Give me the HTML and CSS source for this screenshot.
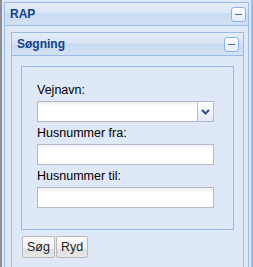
FILE: index.html
```html
<!DOCTYPE html>
<html lang="da">
<head>
  <meta charset="UTF-8">
  <title>RAP</title>
  <link rel="stylesheet" href="styles.css">
</head>
<body>
  <div class="frame">
    <div class="panel outer">
      <div class="panel-header">
        <span class="panel-title">RAP</span>
        <span class="tool"></span>
      </div>
      <div class="panel-body">
        <div class="panel inner">
          <div class="panel-header">
            <span class="panel-title">Søgning</span>
            <span class="tool"></span>
          </div>
          <div class="panel-body form-body">
            <div class="fieldset">
              <label class="field-label">Vejnavn:</label>
              <div class="combo">
                <input class="text-input" type="text">
                <span class="trigger">
                  <svg width="9" height="6" viewBox="0 0 9 6"><path d="M1 1 L4.5 4.5 L8 1" fill="none" stroke="#2b4f8c" stroke-width="2"/></svg>
                </span>
              </div>
              <label class="field-label">Husnummer fra:</label>
              <input class="text-input full" type="text">
              <label class="field-label">Husnummer til:</label>
              <input class="text-input full" type="text">
            </div>
            <div class="buttons">
              <button class="btn">Søg</button>
              <button class="btn">Ryd</button>
            </div>
          </div>
        </div>
      </div>
    </div>
  </div>
</body>
</html>
```

FILE: styles.css
```css
* {
  margin: 0;
  padding: 0;
  box-sizing: border-box;
}

body {
  width: 253px;
  height: 267px;
  overflow: hidden;
  background: #dfe8f6;
  font-family: "Liberation Sans", Arial, sans-serif;
  font-size: 12px;
}

.frame {
  height: 267px;
  border-left: 2px solid #8f8f8f;
  border-right: 2px solid #99bbe8;
  padding: 2px 2px 0 2px;
  background: #dfe8f6;
}

.panel {
  border: 1px solid #99bbe8;
  background: #dfe8f6;
}

.outer {
  height: 100%;
  border-bottom: none;
}

.panel-header {
  display: flex;
  align-items: center;
  justify-content: space-between;
  height: 23px;
  padding: 0 2px 0 5px;
  border-bottom: 1px solid #99bbe8;
  background: linear-gradient(#e4ecf8 0%, #d9e5f5 45%, #c9daf0 50%, #d3e1f3 100%);
}

.inner .panel-header {
  padding-right: 4px;
}

.panel-title {
  color: #15428b;
  font-weight: bold;
  font-size: 12px;
}

.tool {
  position: relative;
  width: 15px;
  height: 15px;
  border: 1px solid #8db2e3;
  border-radius: 3px;
  background: linear-gradient(#ffffff, #e3ecf8);
}

.tool::after {
  content: "";
  position: absolute;
  left: 3px;
  top: 6px;
  width: 7px;
  height: 1px;
  background: #3f6aa8;
}

.outer > .panel-body {
  padding: 6px 4px 0 6px;
}

.inner {
  border-bottom: none;
  height: 240px;
}

.form-body {
  padding: 10px 9px 0 9px;
}

.fieldset {
  border: 1px solid #99bbe8;
  padding: 15px 15px 18px 15px;
  display: flex;
  flex-direction: column;
}

.field-label {
  color: #000;
  font-size: 12.5px;
  line-height: 16px;
  margin-bottom: 3px;
}

.combo {
  display: flex;
  width: 177px;
  margin-bottom: 3px;
}

.text-input {
  height: 21px;
  border: 1px solid #b5b8c8;
  background: linear-gradient(#eeeeee 0, #ffffff 4px);
  font-family: inherit;
  outline: none;
}

.combo .text-input {
  width: 160px;
  border-right: none;
}

.trigger {
  width: 17px;
  height: 21px;
  border: 1px solid #b5b8c8;
  background: linear-gradient(#ffffff, #e4e9f1);
  display: flex;
  align-items: center;
  justify-content: center;
}

.full {
  width: 177px;
  margin-bottom: 3px;
}

.buttons {
  display: flex;
  gap: 1px;
  margin: 6px 0 0 1px;
}

.btn {
  height: 22px;
  padding: 0 4px;
  border: 1px solid #b9b9b9;
  border-radius: 2px;
  background: linear-gradient(#fbfbfb 0%, #f0f0f0 60%, #dedede 61%, #e8e8e8 100%);
  font-family: inherit;
  font-size: 12.5px;
  color: #222;
}
```
